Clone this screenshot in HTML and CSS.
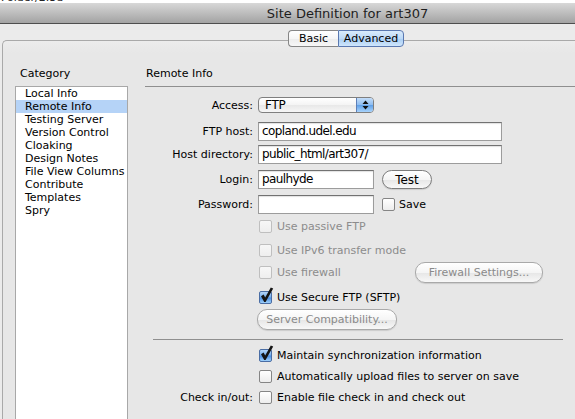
FILE: index.html
```html
<!DOCTYPE html>
<html>
<head>
<meta charset="utf-8">
<title>Site Definition for art307</title>
<link rel="stylesheet" href="styles.css">
</head>
<body>
<div class="topstrip"><span>Folder/2.3d</span></div>
<div class="titlebar"><span class="title">Site Definition for art307</span></div>
<div class="window">
  <div class="tabs">
    <span class="seg seg-first">Basic</span><span class="seg seg-last active">Advanced</span>
  </div>
  <div class="box">
    <div class="cat">
      <div class="cat-label">Category</div>
      <ul class="cat-list">
        <li>Local Info</li>
        <li class="sel">Remote Info</li>
        <li>Testing Server</li>
        <li>Version Control</li>
        <li>Cloaking</li>
        <li>Design Notes</li>
        <li>File View Columns</li>
        <li>Contribute</li>
        <li>Templates</li>
        <li>Spry</li>
      </ul>
    </div>
    <div class="panel">
      <div class="panel-head">Remote Info</div>
      <div class="form">
        <div class="row r-access">
          <span class="lbl">Access:</span>
          <div class="select"><span class="select-val">FTP</span><span class="stepper"><svg width="7" height="10" viewBox="0 0 7 10"><path d="M3.5 0.5 L6.5 4 L0.5 4 Z M0.5 6 L6.5 6 L3.5 9.5 Z" fill="#111"/></svg></span></div>
        </div>
        <div class="row r-host">
          <span class="lbl">FTP host:</span>
          <div class="field field-wide">copland.udel.edu</div>
        </div>
        <div class="row r-dir">
          <span class="lbl">Host directory:</span>
          <div class="field field-wide">public_html/art307/</div>
        </div>
        <div class="row r-login">
          <span class="lbl">Login:</span>
          <div class="field field-short">paulhyde</div>
          <div class="btn btn-test">Test</div>
        </div>
        <div class="row r-pass">
          <span class="lbl">Password:</span>
          <div class="field field-short"></div>
          <span class="cb cb-save"></span><span>Save</span>
        </div>
        <div class="row r-passive">
          <span class="lbl"></span>
          <span class="cb dis"></span><span class="dis-text">Use passive FTP</span>
        </div>
        <div class="row r-ipv6">
          <span class="lbl"></span>
          <span class="cb dis"></span><span class="dis-text">Use IPv6 transfer mode</span>
        </div>
        <div class="row r-firewall">
          <span class="lbl"></span>
          <div class="fw-item"><span class="cb dis"></span><span class="dis-text">Use firewall</span></div>
          <div class="btn dis btn-fw">Firewall Settings...</div>
        </div>
        <div class="row r-sftp">
          <span class="lbl"></span>
          <span class="cb on"><svg class="tick" width="15" height="17" viewBox="0 0 15 17"><path d="M2 9.2 L4.6 7.6 L6.2 10.6 L11.8 0.4 L14.2 1.6 L6.6 15 L5.2 15 Z" fill="#141414"/></svg></span><span>Use Secure FTP (SFTP)</span>
        </div>
        <div class="row r-compat">
          <span class="lbl"></span>
          <div class="btn dis btn-compat">Server Compatibility...</div>
        </div>
        <div class="sep"></div>
        <div class="row r-maintain">
          <span class="lbl"></span>
          <span class="cb on"><svg class="tick" width="15" height="17" viewBox="0 0 15 17"><path d="M2 9.2 L4.6 7.6 L6.2 10.6 L11.8 0.4 L14.2 1.6 L6.6 15 L5.2 15 Z" fill="#141414"/></svg></span><span>Maintain synchronization information</span>
        </div>
        <div class="row r-auto">
          <span class="lbl"></span>
          <span class="cb"></span><span>Automatically upload files to server on save</span>
        </div>
        <div class="row r-check">
          <span class="lbl">Check in/out:</span>
          <span class="cb"></span><span>Enable file check in and check out</span>
        </div>
      </div>
    </div>
  </div>
</div>
</body>
</html>
```
FILE: styles.css
```css
html, body {
  margin: 0;
  padding: 0;
}
body {
  width: 575px;
  height: 419px;
  overflow: hidden;
  font-family: "DejaVu Sans", "Liberation Sans", sans-serif;
  font-size: 11px;
  color: #000;
  background: #ebebeb;
}
.topstrip {
  height: 3px;
  background: #fff;
  overflow: hidden;
}
.topstrip span {
  display: block;
  font-size: 11px;
  line-height: 11px;
  margin-top: -8px;
  padding-left: 1px;
  color: #222;
}
.titlebar {
  height: 20px;
  background: linear-gradient(#d8d8d8, #bdbdbd 50%, #a3a3a3);
  border-bottom: 1px solid #4e4e4e;
  display: flex;
  align-items: center;
  justify-content: center;
  padding-left: 120px;
}
.title {
  font-size: 13px;
  color: #1e1e1e;
}
.window {
  padding-top: 6px;
}
.tabs {
  display: flex;
  justify-content: center;
  padding-left: 117px;
  height: 17px;
  position: relative;
  z-index: 1;
}
.seg {
  box-sizing: border-box;
  height: 17px;
  border: 1px solid #868686;
  font-size: 11px;
  line-height: 15px;
  text-align: center;
  background: linear-gradient(#ffffff, #f6f6f6 50%, #ececec 51%, #f7f7f7);
}
.seg-first {
  width: 50px;
  border-radius: 4px 0 0 4px;
  border-right: none;
}
.seg-last {
  width: 66px;
  border-radius: 0 4px 4px 0;
}
.seg.active {
  border-color: #5a78b0;
  background: linear-gradient(#d9ebfc, #bcd9f7 50%, #a8cdf3 51%, #cfe6fc);
}
.box {
  margin: -7px 0 0 2px;
  height: 378px;
  border: 1px solid #a9a9a9;
  border-right: none;
  border-bottom: none;
  border-radius: 5px 0 0 0;
  background: linear-gradient(#ececec, #e7e7e7 12px);
  display: flex;
  padding-left: 12px;
}
.cat {
  width: 113px;
  flex: none;
  display: flex;
  flex-direction: column;
}
.cat-label {
  margin: 26px 0 0 5px;
  line-height: 13px;
}
.cat-list {
  list-style: none;
  margin: 6px 0 0;
  padding: 0;
  background: #fff;
  border: 1px solid #a8a8a8;
  border-bottom: none;
  flex: 1;
}
.cat-list li {
  height: 13px;
  line-height: 13px;
  padding-left: 9px;
  white-space: nowrap;
}
.cat-list li.sel {
  background: #b5d3f7;
}
.panel {
  margin-left: 17px;
  flex: 1;
  min-width: 0;
}
.panel-head {
  margin-top: 26px;
  line-height: 13px;
  padding: 0 0 6px 1px;
  border-bottom: 1px solid #8f8f8f;
}
.form {
  display: flex;
  flex-direction: column;
}
.row {
  display: flex;
  align-items: center;
  white-space: nowrap;
}
.lbl {
  flex: none;
  width: 108px;
  margin-right: 5px;
  text-align: right;
}
.r-access { margin-top: 10px; height: 16px; }
.r-host { margin-top: 9px; height: 19px; }
.r-dir { margin-top: 4px; height: 19px; }
.r-login { margin-top: 6px; height: 19px; }
.r-pass { margin-top: 6px; height: 19px; }
.r-passive { margin-top: 5px; height: 14px; }
.r-ipv6 { margin-top: 10px; height: 14px; }
.r-firewall { margin-top: 5px; height: 21px; }
.r-sftp { margin-top: 7px; height: 14px; }
.r-compat { margin-top: 5px; height: 21px; }
.r-maintain { margin-top: 8px; height: 14px; }
.r-auto { margin-top: 7px; height: 14px; }
.r-check { margin-top: 7px; height: 14px; }

.select {
  box-sizing: border-box;
  width: 116px;
  height: 16px;
  border: 1px solid #7f7f7f;
  border-radius: 4px;
  background: linear-gradient(#ffffff, #f4f4f4 50%, #e8e8e8 51%, #f6f6f6);
  display: flex;
  align-items: center;
  overflow: hidden;
}
.select-val {
  flex: 1;
  padding-left: 6px;
  font-size: 12px;
  letter-spacing: -0.3px;
  line-height: 14px;
}
.stepper {
  width: 16px;
  height: 14px;
  border-left: 1px solid #5d7fb8;
  background: linear-gradient(#c3ddf9, #8dbcf0 50%, #5e9fe8 51%, #a8d3fb);
  display: flex;
  align-items: center;
  justify-content: center;
}
.field {
  box-sizing: border-box;
  height: 19px;
  border: 1px solid #9c9c9c;
  border-top-color: #727272;
  background: #fff;
  box-shadow: inset 0 1px 1px rgba(0, 0, 0, 0.12);
  font-size: 12px;
  letter-spacing: -0.6px;
  line-height: 17px;
  padding-left: 3px;
}
.field-wide { width: 244px; }
.field-short { width: 116px; }

.btn {
  box-sizing: border-box;
  border: 1px solid #7d7d7d;
  border-radius: 10px;
  background: linear-gradient(#ffffff, #f5f5f5 50%, #e6e6e6 51%, #f8f8f8);
  box-shadow: 0 1px 1px rgba(0, 0, 0, 0.12);
  display: flex;
  align-items: center;
  justify-content: center;
  font-size: 11px;
}
.btn.dis {
  color: #8a8a8a;
  border-color: #a9a9a9;
}
.btn-test {
  width: 50px;
  height: 19px;
  margin-left: 8px;
  font-size: 12px;
}
.btn-fw {
  width: 128px;
  height: 21px;
}
.btn-compat {
  width: 140px;
  height: 21px;
  margin-left: -1px;
}
.fw-item {
  width: 157px;
  display: flex;
  align-items: center;
}

.cb {
  flex: none;
  box-sizing: border-box;
  width: 13px;
  height: 13px;
  border: 1px solid #858585;
  border-radius: 2px;
  background: linear-gradient(#ffffff, #ededed);
  margin: 0 5px 0 1px;
  position: relative;
}
.cb.dis {
  border-color: #bfbfbf;
  background: linear-gradient(#f7f7f7, #eeeeee);
}
.cb.on {
  border-color: #4a6da4;
  background: linear-gradient(#b4d5f7, #75aeec 45%, #4c8fe3 55%, #9fd0fa);
}
.cb-save {
  margin-left: 8px;
  margin-right: 4px;
}
.tick {
  position: absolute;
  left: -1px;
  top: -5px;
}
.dis-text {
  color: #8c8c8c;
}
.sep {
  margin: 9px 0 0 8px;
  width: 410px;
  height: 1px;
  background: #8f8f8f;
}
```
